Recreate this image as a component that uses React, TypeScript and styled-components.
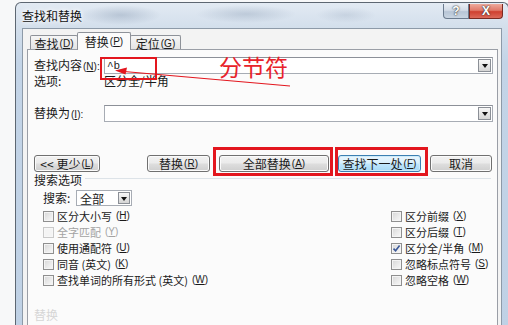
import React from "react";
import styled, { createGlobalStyle } from "styled-components";

const GlobalStyle = createGlobalStyle`
  html, body { margin: 0; padding: 0; overflow: hidden; background: #f7f8f9; }
  body {
    font-family: "Noto Sans CJK SC", "Liberation Sans", sans-serif;
    font-size: 12px;
    color: #1a1a1a;
  }
  * { box-sizing: border-box; }
`;

const Page = styled.div`
  position: relative;
  width: 508px;
  height: 325px;
  overflow: hidden;
  padding: 2px 0 0 15px;
`;

const Window = styled.div`
  width: 494px;
  height: 340px;
  border: 1px solid #5d6772;
  border-bottom: none;
  border-radius: 6px 6px 0 0;
  background: linear-gradient(180deg, #e2eaf3 0%, #d2deeb 26px, #c3d4e7 60px, #bfd1e5 100%);
  display: flex;
  flex-direction: column;
`;

const TitleBar = styled.div`
  height: 25px;
  flex: none;
  display: flex;
  align-items: flex-start;
  padding: 0 5px 0 6px;
  background:
    radial-gradient(ellipse 40px 10px at 105px 12px, rgba(120, 140, 165, 0.35), transparent),
    radial-gradient(ellipse 50px 9px at 230px 11px, rgba(120, 140, 165, 0.3), transparent),
    radial-gradient(ellipse 30px 8px at 330px 12px, rgba(120, 140, 165, 0.2), transparent);
`;

const Title = styled.span`
  margin-top: 5px;
  font-size: 12px;
  line-height: 15px;
  color: #111;
  text-shadow: 0 0 4px #fff, 0 0 6px #fff;
`;

const Spacer = styled.div`
  flex: 1;
`;

const CaptionBtn = styled.div<{ $w: number; $close?: boolean }>`
  width: ${(p) => p.$w}px;
  height: 15px;
  margin-top: 1px;
  border: 1px solid ${(p) => (p.$close ? "#7a2a22" : "#6b7b8e")};
  border-top: none;
  border-radius: ${(p) => (p.$close ? "0 0 4px 0" : "0 0 0 4px")};
  background: ${(p) =>
    p.$close
      ? "linear-gradient(180deg, #eeaa9c 0%, #e07a6a 45%, #cf4030 55%, #dc6a5a 100%)"
      : "linear-gradient(180deg, #e9eef4 0%, #d2dbe6 45%, #b7c5d6 55%, #c9d5e2 100%)"};
  display: flex;
  align-items: center;
  justify-content: center;
  color: #fff;
  font-family: "Liberation Sans", sans-serif;
  font-weight: bold;
  font-size: 12px;
  line-height: 12px;
  text-shadow: 0 0 2px #333, 0 0 1px #333;
`;

const Client = styled.div`
  flex: 1;
  margin: 0 6px;
  border: 1px solid #8d9aa8;
  border-bottom: none;
  background: #f3f3f3;
  display: flex;
  flex-direction: column;
  padding: 3px 3px 0 4px;
`;

const TabRow = styled.div`
  display: flex;
  align-items: flex-end;
  height: 18px;
  padding-left: 3px;
  margin-bottom: -1px;
  position: relative;
  z-index: 1;
`;

const Tab = styled.div<{ $w: number; $active?: boolean }>`
  width: ${(p) => p.$w}px;
  height: ${(p) => (p.$active ? 18 : 14)}px;
  margin-bottom: ${(p) => (p.$active ? 0 : 1)}px;
  margin-left: -1px;
  border: 1px solid #8e9299;
  border-bottom: none;
  border-radius: 2px 2px 0 0;
  background: ${(p) => (p.$active ? "#fbfbfb" : "linear-gradient(180deg, #f6f6f6, #e4e4e4)")};
  display: flex;
  align-items: center;
  justify-content: center;
  line-height: 13px;
  padding-top: ${(p) => (p.$active ? 0 : 1)}px;
  position: relative;
  z-index: ${(p) => (p.$active ? 2 : 1)};
  &:first-child { margin-left: 0; }
`;

const Panel = styled.div`
  flex: 1;
  border: 1px solid #9a9ea6;
  border-bottom: none;
  background: #fbfbfb;
  padding-top: 7px;
  display: flex;
  flex-direction: column;
`;

const FieldRow = styled.div<{ $gap?: number }>`
  display: flex;
  align-items: center;
  height: 17px;
  margin-top: ${(p) => p.$gap ?? 0}px;
  padding: 0 4px 0 6px;
`;

const FieldLabel = styled.span`
  width: 70px;
  flex: none;
  line-height: 14px;
  white-space: nowrap;
`;

const TextBox = styled.div`
  flex: 1;
  height: 17px;
  border: 1px solid #a7acb4;
  border-top-color: #8c9098;
  background: #fff;
  display: flex;
  align-items: center;
  justify-content: space-between;
  padding: 0 1px 0 2px;
  font-family: "Liberation Mono", monospace;
  font-size: 11px;
`;

const DropBtn = styled.span<{ $size?: number }>`
  width: ${(p) => p.$size ?? 13}px;
  height: ${(p) => p.$size ?? 13}px;
  flex: none;
  border: 1px solid #8b8f96;
  background: linear-gradient(180deg, #f7f7f7 0%, #e6e6e6 50%, #d5d5d5 100%);
  display: flex;
  align-items: center;
  justify-content: center;
  &::after {
    content: "";
    border-left: 3px solid transparent;
    border-right: 3px solid transparent;
    border-top: 4px solid #111;
    margin-top: 1px;
  }
`;

const InfoRow = styled.div`
  display: flex;
  height: 14px;
  line-height: 14px;
  padding-left: 6px;
`;

const ButtonRow = styled.div`
  display: flex;
  align-items: center;
  gap: 9px;
  height: 17px;
  margin-top: 33px;
  padding: 0 5px 0 6px;
`;

const Btn = styled.div<{ $w: number; $default?: boolean }>`
  width: ${(p) => p.$w}px;
  height: 17px;
  border: 1px solid ${(p) => (p.$default ? "#3c7fb1" : "#707070")};
  border-radius: 3px;
  background: ${(p) =>
    p.$default
      ? "linear-gradient(180deg, #eaf6fd 0%, #d9f0fc 45%, #bee6fd 55%, #a7d9f5 100%)"
      : "linear-gradient(180deg, #f2f2f2 0%, #ebebeb 45%, #dddddd 55%, #cfcfcf 100%)"};
  box-shadow: inset 0 0 0 1px ${(p) => (p.$default ? "#cdebf9" : "#fbfbfb")};
  display: flex;
  align-items: center;
  justify-content: center;
  line-height: 13px;
  font-size: 12px;
  white-space: nowrap;
`;

const Heading = styled.div`
  display: flex;
  align-items: center;
  height: 14px;
  line-height: 14px;
  margin-top: 1px;
  padding: 0 6px;
  &::after {
    content: "";
    flex: 1;
    height: 1px;
    margin: -4px 0 0 3px;
    background: #dde3e8;
  }
`;

const SelectRow = styled.div`
  display: flex;
  align-items: center;
  height: 16px;
  margin-top: 3px;
  padding-left: 15px;
`;

const SelectLabel = styled.span`
  width: 33px;
  line-height: 14px;
`;

const Select = styled.div`
  width: 56px;
  height: 16px;
  border: 1px solid #a7acb4;
  background: #fff;
  display: flex;
  align-items: center;
  justify-content: space-between;
  padding: 0 1px 0 3px;
  line-height: 13px;
`;

const CheckGrid = styled.div`
  display: grid;
  grid-template-columns: 348px 1fr;
  grid-template-rows: repeat(5, 16px);
  grid-auto-flow: column;
  margin-top: 2px;
  padding-left: 15px;
`;

const Check = styled.label<{ $disabled?: boolean }>`
  display: flex;
  align-items: center;
  gap: 3px;
  line-height: 14px;
  font-size: 11px;
  color: ${(p) => (p.$disabled ? "#a3a3a3" : "#1a1a1a")};
  white-space: nowrap;
`;

const Box = styled.span<{ $disabled?: boolean }>`
  width: 11px;
  height: 11px;
  flex: none;
  border: 1px solid ${(p) => (p.$disabled ? "#c9c9c9" : "#8f8f8f")};
  background: ${(p) =>
    p.$disabled ? "#f4f4f4" : "linear-gradient(135deg, #d6d6d6 0%, #ececec 60%, #f8f8f8 100%)"};
  box-shadow: inset 0 0 0 1px ${(p) => (p.$disabled ? "#f7f7f7" : "#f4f4f4")};
  display: flex;
  align-items: center;
  justify-content: center;
`;

const FaintLabel = styled.div`
  margin-top: 20px;
  padding-left: 6px;
  line-height: 14px;
  color: #d6d6d6;
`;

const Acc = styled.span`
  font-family: "Liberation Sans", sans-serif;
  font-size: 10px;
  margin-left: 1px;
`;

const Key = styled.span`
  text-decoration: underline;
  text-underline-offset: 1px;
`;

const Overlay = styled.div`
  position: absolute;
  inset: 0;
  pointer-events: none;
`;

const RedFrame = styled.div<{ $x: number; $y: number; $w: number; $h: number; $t: number }>`
  position: absolute;
  left: ${(p) => p.$x}px;
  top: ${(p) => p.$y}px;
  width: ${(p) => p.$w}px;
  height: ${(p) => p.$h}px;
  border: ${(p) => p.$t}px solid #e3161e;
`;

const RedNote = styled.span`
  position: absolute;
  left: 219px;
  top: 53px;
  font-size: 23px;
  line-height: 26px;
  color: #e8222a;
`;

const Arrow = styled.svg`
  position: absolute;
  left: 0;
  top: 0;
`;

const acc = (text: string, k: string, tail = "") => (
  <>
    {text}
    <Acc>
      (<Key>{k}</Key>){tail}
    </Acc>
  </>
);

const CheckMark = () => (
  <svg width="9" height="9" viewBox="0 0 9 9">
    <path d="M1.5 4.6 L3.6 6.8 L7.6 1.6" fill="none" stroke="#3b5898" strokeWidth="1.6" />
  </svg>
);

type Opt = { label: string; k: string; checked?: boolean; disabled?: boolean };

const options: Opt[] = [
  { label: "区分大小写", k: "H" },
  { label: "全字匹配", k: "Y", disabled: true },
  { label: "使用通配符", k: "U" },
  { label: "同音 (英文)", k: "K" },
  { label: "查找单词的所有形式 (英文)", k: "W" },
  { label: "区分前缀", k: "X" },
  { label: "区分后缀", k: "T" },
  { label: "区分全/半角", k: "M", checked: true },
  { label: "忽略标点符号", k: "S" },
  { label: "忽略空格", k: "W" },
];

export default function App() {
  return (
    <Page>
      <GlobalStyle />
      <Window>
        <TitleBar>
          <Title>查找和替换</Title>
          <Spacer />
          <CaptionBtn $w={26}>?</CaptionBtn>
          <CaptionBtn $w={34} $close>
            X
          </CaptionBtn>
        </TitleBar>
        <Client>
          <TabRow>
            <Tab $w={48}>{acc("查找", "D")}</Tab>
            <Tab $w={54} $active>
              {acc("替换", "P")}
            </Tab>
            <Tab $w={51}>{acc("定位", "G")}</Tab>
          </TabRow>
          <Panel>
            <FieldRow>
              <FieldLabel>{acc("查找内容", "N", ":")}</FieldLabel>
              <TextBox>
                <span>^b</span>
                <DropBtn />
              </TextBox>
            </FieldRow>
            <InfoRow>
              <FieldLabel>选项:</FieldLabel>
              <span>区分全/半角</span>
            </InfoRow>
            <FieldRow $gap={17}>
              <FieldLabel>{acc("替换为", "I", ":")}</FieldLabel>
              <TextBox>
                <span />
                <DropBtn />
              </TextBox>
            </FieldRow>
            <ButtonRow>
              <Btn $w={66}>&lt;&lt; {acc("更少", "L")}</Btn>
              <Spacer />
              <Btn $w={63}>{acc("替换", "R")}</Btn>
              <Btn $w={110}>{acc("全部替换", "A")}</Btn>
              <Btn $w={83} $default>
                {acc("查找下一处", "F")}
              </Btn>
              <Btn $w={62}>取消</Btn>
            </ButtonRow>
            <Heading>搜索选项</Heading>
            <SelectRow>
              <SelectLabel>搜索:</SelectLabel>
              <Select>
                <span>全部</span>
                <DropBtn $size={12} />
              </Select>
            </SelectRow>
            <CheckGrid>
              {options.map((o, i) => (
                <Check key={i} $disabled={o.disabled}>
                  <Box $disabled={o.disabled}>{o.checked && <CheckMark />}</Box>
                  {acc(o.label, o.k)}
                </Check>
              ))}
            </CheckGrid>
            <FaintLabel>替换</FaintLabel>
          </Panel>
        </Client>
      </Window>
      <Overlay>
        <RedFrame $x={100} $y={57} $w={57} $h={23} $t={2} />
        <RedFrame $x={213} $y={147} $w={120} $h={29} $t={3} />
        <RedFrame $x={335} $y={147} $w={93} $h={29} $t={3} />
        <RedNote>分节符</RedNote>
        <Arrow width="508" height="325" viewBox="0 0 508 325">
          <line x1="124" y1="71.5" x2="290" y2="86" stroke="#e3161e" strokeWidth="1.2" />
          <polygon points="115,70.6 127,67.6 125.5,74.6" fill="#e3161e" />
        </Arrow>
      </Overlay>
    </Page>
  );
}
